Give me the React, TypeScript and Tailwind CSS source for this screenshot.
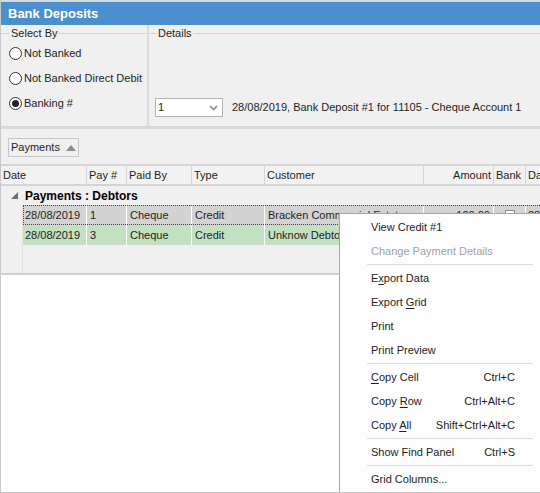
import React from "react";

const cols = [
  { label: "Date", w: "w-[86px]" },
  { label: "Pay #", w: "w-[40px]" },
  { label: "Paid By", w: "w-[65px]" },
  { label: "Type", w: "w-[73px]" },
  { label: "Customer", w: "w-[159px]" },
  { label: "Amount", w: "w-[70px]", right: true },
  { label: "Bank", w: "w-[32px]" },
  { label: "Da", w: "w-[15px]" },
];

const rows = [
  { date: "28/08/2019", pay: "1", by: "Cheque", type: "Credit", customer: "Bracken Commercial Estates", amount: "120.00", selected: true },
  { date: "28/08/2019", pay: "3", by: "Cheque", type: "Credit", customer: "Unknow Debtor", amount: "45.00", selected: false },
];

function Radio({ checked, label }: { checked?: boolean; label: string }) {
  return (
    <div className="flex items-center h-[25px] pl-[8px]">
      <span className="w-[13px] h-[13px] rounded-full border border-[#333] bg-white flex items-center justify-center">
        {checked && <span className="w-[7px] h-[7px] rounded-full bg-[#222]" />}
      </span>
      <span className="ml-[2px]">{label}</span>
    </div>
  );
}

function Acc({ pre, key1, post }: { pre: string; key1: string; post: string }) {
  return (
    <span>
      {pre}
      <span className="underline underline-offset-2">{key1}</span>
      {post}
    </span>
  );
}

function MenuItem({ children, shortcut, disabled }: { children: React.ReactNode; shortcut?: string; disabled?: boolean }) {
  return (
    <div className={`flex items-center h-[24px] pl-[31px] pr-[27px] ${disabled ? "text-[#a3a3a3]" : "text-[#1e1e1e]"}`}>
      <span className="flex-1">{children}</span>
      {shortcut && <span>{shortcut}</span>}
    </div>
  );
}

function Sep() {
  return (
    <div className="h-[3px] flex items-center pl-[27px] pr-[9px]">
      <div className="h-px w-full bg-[#dcdcdc]" />
    </div>
  );
}

export default function App() {
  return (
    <div className="relative w-[540px] h-[493px] overflow-hidden bg-white font-['Liberation_Sans',Arial,sans-serif] text-[11px] text-[#1e1e1e] border-l border-b border-[#c8c8c8]">
      {/* Title */}
      <div className="border-t-2 border-[#d9d9d9] h-[25px] bg-[#4b8fcd] flex items-center px-[7px] text-white font-bold text-[13px]">
        Bank Deposits
      </div>

      {/* Selection panel */}
      <div className="flex h-[102px] bg-[#f0f0f0] border-b border-[#d6d6d6]">
        <div className="w-[148px] border-r-2 border-[#dcdcdc]">
          <div className="flex items-center h-[15px] mt-[1px]">
            <div className="w-[9px] h-px bg-[#d6d6d6]" />
            <span className="px-[1px]">Select By</span>
            <div className="flex-1 h-px bg-[#d6d6d6]" />
          </div>
          <div>
            <Radio label="Not Banked" />
            <Radio label="Not Banked Direct Debit" />
            <Radio label="Banking #" checked />
          </div>
        </div>
        <div className="flex-1 flex flex-col">
          <div className="flex items-center h-[15px] mt-[1px]">
            <div className="w-[8px] h-px bg-[#d6d6d6]" />
            <span className="px-[1px]">Details</span>
            <div className="flex-1 h-px bg-[#d6d6d6]" />
          </div>
          <div className="flex items-center mt-[57px] pl-[6px]">
            <div className="w-[68px] h-[19px] bg-white border border-[#b4b4b4] flex items-center justify-between pl-[2px] pr-[4px]">
              <span>1</span>
              <svg width="9" height="6" viewBox="0 0 9 6">
                <path d="M1 1 L4.5 4.5 L8 1" fill="none" stroke="#8a8a8a" strokeWidth="1.6" />
              </svg>
            </div>
            <span className="ml-[9px]">28/08/2019, Bank Deposit #1 for 11105 - Cheque Account 1</span>
          </div>
        </div>
      </div>

      {/* Grouping panel */}
      <div className="h-[39px] bg-[#f0f0f0] border-t-2 border-[#d9d9d9] border-b-2 border-b-[#d4d4d4] pl-[7px] pt-[9px]">
        <div className="inline-flex items-center h-[19px] w-[71px] border border-[#c6c6c6] pl-[2px]">
          <span>Payments</span>
          <svg className="ml-[6px]" width="10" height="6" viewBox="0 0 10 6">
            <path d="M0 6 L5 0 L10 6 Z" fill="#8c8c8c" />
          </svg>
        </div>
      </div>

      {/* Header */}
      <div className="flex h-[20px] bg-[#f2f2f2] border-b-2 border-[#d4d4d4]">
        {cols.map((c) => (
          <div
            key={c.label}
            className={`${c.w} shrink-0 border-r border-[#d4d4d4] flex items-center px-[2px] overflow-hidden whitespace-nowrap ${c.right ? "justify-end" : ""}`}
          >
            {c.label}
          </div>
        ))}
      </div>

      {/* Group row */}
      <div className="flex items-center h-[19px] bg-[#f0f0f0]">
        <svg className="ml-[10px]" width="7" height="7" viewBox="0 0 7 7">
          <path d="M7 0 L7 7 L0 7 Z" fill="#6e6e6e" />
        </svg>
        <span className="ml-[7px] font-bold text-[12px] text-black">Payments : Debtors</span>
      </div>

      {/* Data rows */}
      <div className="bg-[#f0f0f0] h-[70px] border-b-2 border-[#d0d0d0] flex">
        <div className="w-[22px] shrink-0 border-r border-[#e2e2e2]" />
        <div className="flex-1">
          {rows.map((r) => (
            <div
              key={r.pay}
              className={`flex h-[20px] whitespace-nowrap ${r.selected ? "bg-[#d3d3d3] outline-1 outline-dotted outline-[#444] -outline-offset-1" : "bg-[#c3e0c3]"}`}
            >
              <div className="w-[64px] shrink-0 border-r border-white flex items-center pl-[2px]">{r.date}</div>
              <div className="w-[40px] shrink-0 border-r border-white flex items-center px-[3px]">{r.pay}</div>
              <div className="w-[65px] shrink-0 border-r border-white flex items-center px-[3px]">{r.by}</div>
              <div className="w-[73px] shrink-0 border-r border-white flex items-center px-[3px]">{r.type}</div>
              <div className="w-[159px] shrink-0 border-r border-white flex items-center px-[3px] overflow-hidden">{r.customer}</div>
              <div className="w-[70px] shrink-0 border-r border-white flex items-center justify-end px-[3px] bg-[#d3d3d3]">{r.amount}</div>
              <div className="w-[32px] shrink-0 border-r border-white flex items-center justify-center bg-[#d3d3d3]">
                <span className="w-[10px] h-[10px] bg-white border border-[#8a8a8a]" />
              </div>
              <div className="flex-1 flex items-center px-[2px] bg-[#d3d3d3] overflow-hidden">28</div>
            </div>
          ))}
        </div>
      </div>

      {/* Context menu */}
      <div className="absolute left-[338px] top-[213px] w-[204px] h-[280px] bg-[#fdfdfd] border border-[#a6a6a6] py-[1px] text-[11px]">
        <MenuItem>View Credit #1</MenuItem>
        <MenuItem disabled>Change Payment Details</MenuItem>
        <Sep />
        <MenuItem><Acc pre="E" key1="x" post="port Data" /></MenuItem>
        <MenuItem><Acc pre="Export " key1="G" post="rid" /></MenuItem>
        <MenuItem>Print</MenuItem>
        <MenuItem>Print Preview</MenuItem>
        <Sep />
        <MenuItem shortcut="Ctrl+C"><Acc pre="" key1="C" post="opy Cell" /></MenuItem>
        <MenuItem shortcut="Ctrl+Alt+C"><Acc pre="Copy " key1="R" post="ow" /></MenuItem>
        <MenuItem shortcut="Shift+Ctrl+Alt+C"><Acc pre="Copy " key1="A" post="ll" /></MenuItem>
        <Sep />
        <MenuItem shortcut="Ctrl+S">Show Find Panel</MenuItem>
        <Sep />
        <MenuItem>Grid Columns...</MenuItem>
      </div>
    </div>
  );
}
